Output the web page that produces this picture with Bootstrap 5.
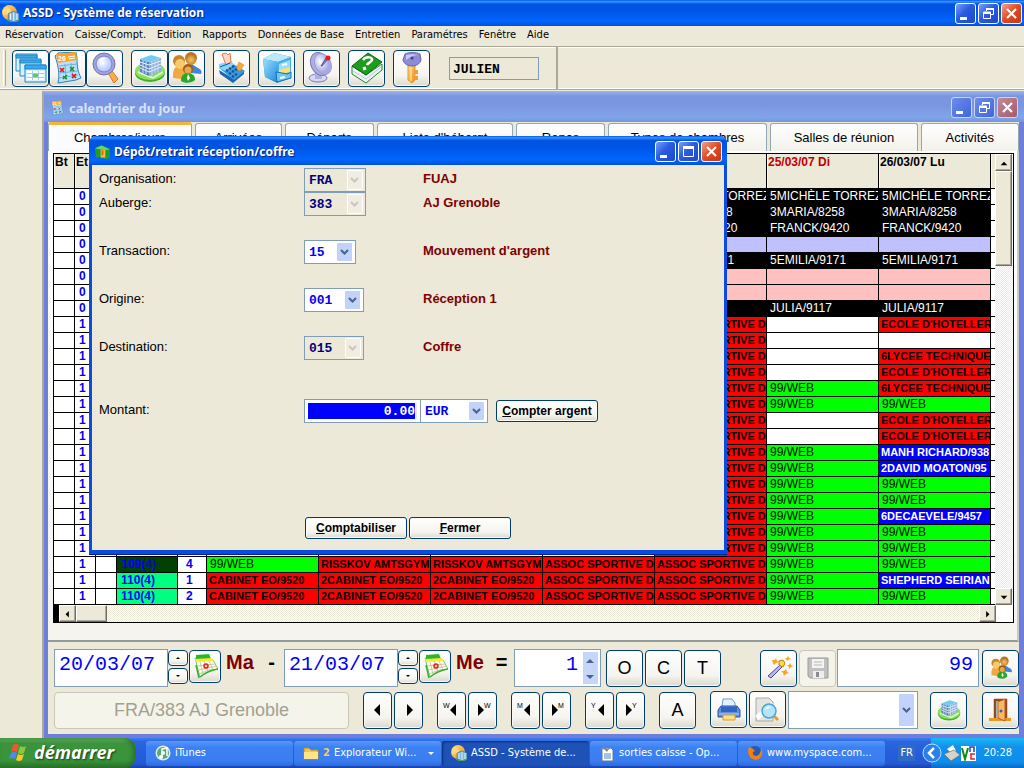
<!DOCTYPE html>
<html lang="fr">
<head>
<meta charset="utf-8">
<meta name="viewport" content="width=device-width, initial-scale=1">
<title>ASSD - Système de réservation</title>
<link rel="stylesheet" href="https://cdn.jsdelivr.net/npm/bootstrap@5.3.0/dist/css/bootstrap.min.css">
<style>
:root{--face:#ece9d8;--ui:"DejaVu Sans Condensed","DejaVu Sans",sans-serif;--sans:"Liberation Sans",Arial,sans-serif;--mono:"Liberation Mono","Courier New",monospace}
body{background:var(--face);font:13px/16px var(--sans);color:#000}
button,input,select{font-family:inherit;border-radius:0;margin:0}
/* Title bars */
.xp-title{background:linear-gradient(#0058ee 0,#3593ff 6%,#0053e1 16%,#0055e5 40%,#0066ff 82%,#0052d6 100%);color:#fff;font:bold 12px/16px "Noto Sans","Open Sans",sans-serif;text-shadow:1px 1px 1px #0a1f7a}
.app-title{height:26px;padding:0 2px}
.wgroup{gap:2px}
.wbtn{width:21px;height:21px;border:1px solid #fff;border-radius:3px;padding:0;background:linear-gradient(135deg,#7a9ef5,#2a5be0 45%,#1d48cd);display:block}
.wbtn svg,.act svg{display:block;margin:auto}
.wclose{background:linear-gradient(135deg,#f0a08a,#e04a22 50%,#c03a14)}
.child-title{background:linear-gradient(#9db4f0 0,#7b96e0 16%,#7b96e0 45%,#80a5ea 85%,#7795de 100%);color:#d8e2f8;text-shadow:none;height:31px;padding:2px 2px 0 6px;font-size:13px}
.child-title .wbtn{border-color:#c9d5f5;background:linear-gradient(135deg,#6d8cec,#3f66da)}
.child-title .wclose{background:linear-gradient(135deg,#c08a9a,#a45a6a)}
/* Menu and toolbar */
.menu{height:20px;font:11px/18px var(--ui);padding-left:5px;gap:11px}
.menu a{color:#000;text-decoration:none}
.tools{height:44px;border-top:1px solid #aca899;border-bottom:1px solid #aca899;box-shadow:inset 0 1px #fff,inset 0 -1px #fff}
.toolset{border-right:2px solid #aca899;width:558px;padding-left:3px;gap:8px}
.grip{width:3px;height:36px;border-right:1px solid #aca899;border-left:1px solid #fff;margin-right:-2px}
.act{border:1px solid #003c74;border-radius:4px;padding:0;background:linear-gradient(#fff,#f5f4ef 70%,#dcd8ca);width:37px;height:37px;font:18px/20px var(--sans);color:#000;box-shadow:inset 0 0 0 1px #faf9f6;flex:none}
.act svg{width:32px;height:32px}
.user-box{width:90px;height:23px;border:1px solid #7f9db9;background:var(--face);font:bold 13px/18px var(--mono);padding:2px 3px 0;margin-left:11px}
/* Child window */
.child{margin:1px 0 0 44px;border:solid #6f7edb;border-width:0 5px 4px 4px;background:var(--face);box-shadow:-2px 0 #aca899}
.child>.xp-title{margin:0 -5px 0 -4px}
.tabs{height:29px;gap:3px;align-items:flex-end}
.tab{height:28px;border:1px solid #91a7b4;border-bottom:0;border-radius:3px 3px 0 0;background:linear-gradient(#fff,#f2f1ea);font:13px/16px var(--sans);padding:0;text-align:center;overflow:hidden;white-space:nowrap}
.tab.on{height:29px;border-top:3px solid #f9b233;background:#fcfcfe}
.sheet{background:linear-gradient(#fff,#f4f3ee);border-bottom:2px solid #919b9c;border-right:2px solid #c8ccc8;padding:2px 3px 17px 5px}
.plan{border:1px solid #000;background:#fff}
.plan table{table-layout:fixed;width:100%;border-collapse:separate;border-spacing:0;font:12px/15px var(--sans)}
.plan td,.plan th{border:solid #000;border-width:0 1px 1px 0;padding:0 0 0 3px;height:16px;overflow:hidden;white-space:nowrap}
.plan th{height:35px;background:var(--face);vertical-align:top;padding:1px 0 0 1px;box-shadow:inset 1px 0 #f8f7f0}
.plan tr>:last-child{border-right:0}
.plan .num{color:#00f;font-weight:bold;padding-left:4px}
.plan .big{font-size:11px;font-weight:bold;padding-left:2px}
.s-k{background:#000;color:#fff}.s-l{background:#c0c0ff}.s-p{background:#ffc0c0}.s-w{background:#fff}
.s-r{background:#f00}.s-g{background:#0f0}.s-b{background:#00f;color:#fff}
.s-d{background:#004000}.s-t{background:#00ff80}
.track{background:repeating-conic-gradient(#fff 0 25%,#ece9d8 0 50%) 0 0/2px 2px}
.vbar{width:18px;flex:none}
.sb{width:17px;height:17px;border:1px solid;border-color:#fff #716f64 #716f64 #fff;background:var(--face);padding:0;box-shadow:inset -1px -1px #aca899;font-size:0;flex:none}
.vthumb{height:95px}.hthumb{width:31px}
.hbar{height:17px;border-left:5px solid #000}
.corner{width:17px;background:#fff}
/* Booking controls */
.ctl{padding:7px 0 5px 6px}
.ctl1{height:38px}.ctl2{height:38px;margin-top:4px}
.box{border:1px solid #7f9db9;background:#fff;color:#00f;font:20px/24px var(--mono);height:38px;min-width:0}
.day{width:114px;padding:0 4px 8px}
.spins{gap:2px;height:35px;margin-top:-2px;margin-right:1px}
.spin{width:20px;height:16px}
.spin svg{width:6px;height:4px}
.cal{width:32px;height:33px;margin:-4px 5px 0 0}.cal svg{width:26px;height:26px}
.wd{color:#800000;font:bold 20px/24px var(--sans);width:33px;margin-top:-12px}
.eq{font:bold 20px/24px var(--sans);width:25px;text-align:center;margin-top:-12px}
.nights{width:87px;position:relative}
.nights input{width:100%;text-align:right;padding:0 22px 8px 4px}
.nights span{position:absolute;right:3px;top:3px;width:15px;height:32px;background:#c6d6fb}
.trio{gap:2px;margin-left:5px}
.count{width:142px;text-align:right;padding:0 5px 8px;margin:0 3px 0 1px}
.act.off{border-color:#c9c7ba;background:#f5f4ea;color:#a1a192;box-shadow:none}
.nav-b{width:29px}.nav-b svg{width:27px;height:27px}
.step,.outs{gap:2px}
.arrows{gap:14px;margin:0 14px}
.outs{margin:0 12px 0 14px}
.hot{margin-right:15px}
.pick{appearance:none;border:1px solid #7f9db9;background:#fff url("data:image/svg+xml,%3Csvg xmlns='http://www.w3.org/2000/svg' width='15' height='18'%3E%3Crect width='15' height='18' rx='1' fill='%23c1d3fb'/%3E%3Cpath d='M4 7l3.500 3.500L11 7' fill='none' stroke='%234d6185' stroke-width='2'/%3E%3C/svg%3E") no-repeat right 3px center;font:bold 13px/18px var(--mono);color:#00f;height:24px;padding:2px 0 0 4px}
.pick:disabled{opacity:1;color:#000080;background-color:var(--face);background-image:url("data:image/svg+xml,%3Csvg xmlns='http://www.w3.org/2000/svg' width='16' height='20'%3E%3Crect x='.5' y='.5' width='15' height='19' rx='1' fill='%23f0eee3' stroke='%23fff'/%3E%3Cpath d='M4 8l3.500 3.500L11 8' fill='none' stroke='%23c9c7ba' stroke-width='2'/%3E%3C/svg%3E");background-position:right 2px center}
.pick-tall{height:38px;width:130px;background-image:url("data:image/svg+xml,%3Csvg xmlns='http://www.w3.org/2000/svg' width='15' height='32'%3E%3Crect width='15' height='32' rx='1' fill='%23c1d3fb'/%3E%3Cpath d='M4 14l3.500 3.500L11 14' fill='none' stroke='%234d6185' stroke-width='2'/%3E%3C/svg%3E")}
/* Cash dialog */
.dlg{position:absolute;left:89px;top:136px;width:638px;max-width:100%;border:solid #0a4be0;border-width:0 3px 4px;border-radius:7px 7px 0 0;background:var(--face);box-shadow:0 1px #001ea0}
.dlg>.xp-title{height:29px;margin:0 -3px;padding:2px 5px 0 6px;border-radius:7px 7px 0 0}
.dlg form{padding:3px 8px 11px 7px}
.frow{height:24px}
.frow>label{width:205px}
.frow>label,.said{padding-top:3px}
.slot{width:119px}
.said{font-weight:bold;color:#800000}
.amount{width:117px;height:24px;border:1px solid #7f9db9;padding:3px 5px 3px 3px;background:#00f;background-clip:content-box;color:#fff;font:bold 13px/16px var(--mono);text-align:right;box-shadow:inset 0 0 0 3px #fff}
.push{width:102px;height:22px;font:bold 12px/14px var(--sans);border-radius:3px}
.w62{width:62px}.w52{width:52px}.w60{width:60px}.w68{width:68px;margin-left:-1px}
.money{margin-top:39px}
.ends{margin:94px 0 0 206px;gap:2px}
/* Task bar */
.task{height:30px;background:linear-gradient(#3a80f0 0,#2a66de 12%,#245edc 50%,#2459d4 85%,#1941a5);font:11px/16px var(--ui);color:#fff}
.start{width:136px;border:0;border-radius:0 12px 12px 0;background:linear-gradient(#5fb35f 0,#3c933c 18%,#38943a 75%,#2a6e2a);color:#fff;font:italic bold 18px/24px "Noto Sans","Open Sans",sans-serif;text-shadow:1px 1px 2px #123c12;padding:0 0 2px 8px;box-shadow:inset -3px 0 4px #2c702c;margin-right:10px}
.tbtn{flex:0 1 147px;height:25px;border:0;border-radius:3px;background:linear-gradient(#5a98fa,#3c81f3 25%,#3a7df0 80%,#2c6adf);color:#fff;text-align:left;padding:0 6px 0 9px;white-space:nowrap;overflow:hidden;margin-right:1px}
.tbtn.on{background:#1e52b7;box-shadow:inset 1px 1px 2px #0d2e78}
.tbtn svg{flex:none}
.two{color:#ffc860}
.lang{background:#316ac5;padding:0 2px}
.tray{width:93px;background:linear-gradient(#19b9f5,#1290ea 30%,#0f8dec 80%,#0b6ac0)}
.tray svg{overflow:visible}
</style>
</head>
<body class="d-flex flex-column min-vh-100 position-relative">
<svg width="0" height="0" class="position-absolute" aria-hidden="true">
<defs>
<linearGradient id="gb" x2="1" y2="1"><stop stop-color="#9be0ff"/><stop offset="1" stop-color="#2089d8"/></linearGradient>
<linearGradient id="go" x2="1" y2="1"><stop stop-color="#ffe08a"/><stop offset="1" stop-color="#f08a10"/></linearGradient>
<radialGradient id="gp" cx=".4" cy=".35"><stop stop-color="#fff"/><stop offset="1" stop-color="#a8a8e4"/></radialGradient>
<radialGradient id="gl" cx=".4" cy=".4"><stop stop-color="#fff"/><stop offset="1" stop-color="#b4ccff"/></radialGradient>
<radialGradient id="gh"><stop offset="0" stop-color="#f2c56a"/><stop offset="1" stop-color="#c8862a"/></radialGradient>
<symbol id="i-wins" viewBox="0 0 32 32"><g fill="#d8effc" stroke="#1f86cc"><path d="M1 2h21v17H1z"/><path d="M1 3h21v3H1z" fill="#3aa8ea"/><path d="M5 7h21v17H5z"/><path d="M5 8h21v3H5z" fill="#3aa8ea"/><path d="M10 13h21v17H10z"/><path d="M10 13h21v4H10z" fill="#3aa8ea"/></g><path d="M12 19h17v9H12z" fill="#fff"/><path d="M12 21.500h17M12 25.500h17M17.500 19v9M23.500 19v9" stroke="#9ccdea"/><path d="M18 22h5v3h-5z" fill="#62c85a"/></symbol>
<symbol id="i-sheet" viewBox="0 0 32 32"><path d="M3 4L6 1l18-1 1 6c0 9 1 14 4 20l-5 2-18 3c2-9 0-18-3-27z" fill="#b8e0fa" stroke="#2c80c4"/><path d="M4 2l20-2 1 8-19 3z" fill="#ffa51c"/><text x="6" y="9" font-size="7" font-weight="bold" fill="#fff" font-family="Liberation Sans">26</text><path d="M16 5l7-1M17 7l6-1" stroke="#fff"/><path d="M7 14l18-2M8 21l18-2M7 26l19-3M13 12l1 16M19 11l2 16" stroke="#68b4e4"/><path d="M8 16l4 4m0-4l-4 4M20 22l4 4m0-4l-4 4" stroke="#e01818" stroke-width="1.700"/><path d="M18 15l4 4m0-4l-4 4M11 24l4 3m0-4l-4 4" stroke="#1b8c1b" stroke-width="1.500"/></symbol>
<symbol id="i-lens" viewBox="0 0 32 32"><path d="M19 21l4-2 6 8-4 4z" fill="#fbae4a" stroke="#d87828"/><circle cx="15" cy="12" r="11" fill="#a4a4dc" stroke="#7070b4"/><circle cx="15" cy="12" r="8" fill="url(#gl)" stroke="#8080c0"/><path d="M10 10c1-4 4-5 7-4-3 1-5 4-7 4z" fill="#fff"/></symbol>
<symbol id="i-hotel" viewBox="0 0 32 32"><ellipse cx="16" cy="21" rx="15" ry="9" fill="#3cb428"/><ellipse cx="16" cy="19" rx="15" ry="9" fill="#8ce060"/><path d="M4 20l15 6 10-6" stroke="#dff5cc" stroke-width="2" fill="none"/><path d="M6 7l9 3v14l-9-4z" fill="#5c84b8"/><path d="M15 10l12-4v13l-12 5z" fill="#8aacd8"/><path d="M6 7l11-4 10 3-12 4z" fill="#70ccf4"/><path d="M6 10l9 3 12-4M6 13l9 4 12-5M6 16l9 4 12-5" stroke="#e8f4ff" fill="none"/><path d="M9 8v13M12 9v13M18 9v14M21 8v13M24 7v13" stroke="#cfe2f6"/></symbol>
<symbol id="i-people" viewBox="0 0 32 32"><path d="M19 11l8 5c4 2 4 4 3 6l-10-1z" fill="#4684d4"/><path d="M2 23c0-7 3-9 7-9s8 3 8 9l-7 4-8-1z" fill="#f0a840"/><circle cx="20" cy="6" r="6" fill="#b87420"/><circle cx="20" cy="8" r="5" fill="url(#gh)"/><circle cx="8" cy="9" r="6" fill="#c88428"/><circle cx="9" cy="12" r="5" fill="#f8c870"/><path d="M10 29c0-6 3-8 7-8s7 2 7 7c-3 3-10 4-14 1z" fill="#28a828"/><path d="M17 22l2 4-2 3-1-3z" fill="#fff"/><circle cx="17" cy="17" r="5" fill="#a05c10"/><circle cx="17" cy="18" r="3.500" fill="#e8a850"/></symbol>
<symbol id="i-cash" viewBox="0 0 32 32"><path d="M3 18l15 9 10-9v4l-11 9-13-9z" fill="#1c68b0"/><path d="M3 16l11-6 15 9-11 9z" fill="#3898e0"/><path d="M3 12l12-3 3 4-9 6-6-3z" fill="#88d4fc"/><path d="M6 2l4-1 2 2 2-2 1 9-5 3z" fill="#ffd8c4" stroke="#e87848"/><path d="M23 10l5 3-4 6-4-2z" fill="#f8a838" stroke="#d88010" stroke-width=".5"/><path d="M10 18l2 1m1-3l2 1m1-3l2 1M13 21l2 1m1-3l2 1m1-3l2 1M16 24l2 1m1-3l2 1" stroke="#16508c" stroke-width="2"/><path d="M4 15l10-4" stroke="#1858a0"/></symbol>
<symbol id="i-cab" viewBox="0 0 32 32"><path d="M2 7L13 1l17 4v21l-14 5L4 25z" fill="#2b8fd2"/><path d="M2 7L13 1l17 4-13 5z" fill="#bce8fc"/><path d="M2 7l15 3v20L4 25z" fill="url(#gb)"/><path d="M17 10l13-5v21l-13 4z" fill="#4ab0e8"/><path d="M18 12l11-4v7l-11 4z" fill="#9cdcfa"/><path d="M21 13l5-1" stroke="#fff" stroke-width="2"/><path d="M18 18l11-3v5l-11 3z" fill="#ffe070"/><path d="M15 20l12 2 3-2v6l-14 4z" fill="#6ac8f8" stroke="#1a70b0"/><path d="M19 26l5-1" stroke="#fff" stroke-width="2"/></symbol>
<symbol id="i-dish" viewBox="0 0 32 32"><ellipse cx="12" cy="26" rx="9" ry="4" fill="#d8d8f4" stroke="#7878b8"/><path d="M9 20h7v7H9z" fill="#b0b0dc"/><ellipse cx="14" cy="12" rx="9" ry="12" transform="rotate(-25 14 12)" fill="#b0b0de" stroke="#7878b8"/><ellipse cx="17" cy="12" rx="8" ry="11" transform="rotate(-25 17 12)" fill="url(#gp)" stroke="#9090cc" stroke-width=".6"/><path d="M15 14l5-8 1 2-5 6z" fill="#7878b4" stroke="#5c5ca0"/><circle cx="22" cy="6" r="2.500" fill="#e81818"/></symbol>
<symbol id="i-book" viewBox="0 0 32 32"><path d="M1 14v8l14 9 16-13v-6L15 23z" fill="#f0f2fa" stroke="#208a20"/><path d="M1 14L17 1l14 9-16 13z" fill="#1e9c1e" stroke="#0a6a0a"/><path d="M2 19l13 8 15-12" fill="none" stroke="#c0c8d8"/><path d="M12 8c3-4 10-3 9 0 0 2-4 2-5 5" fill="none" stroke="#fff" stroke-width="2.500"/><path d="M12 17l3-1" stroke="#fff" stroke-width="3"/></symbol>
<symbol id="i-key" viewBox="0 0 32 32"><path d="M12 12h7v16l-3 3-4-3z" fill="url(#go)" stroke="#e09838"/><path d="M19 18h3v4h-3zM19 24h3v4h-3z" fill="#f0a030"/><path d="M15 12v17" stroke="#fff0b0"/><path d="M9 2c4-2 11-2 15 0l1 6c-1 4-5 6-9 6s-8-2-9-6z" fill="#8c8cd4" stroke="#6464ac"/><path d="M10 3c4-1 9-1 13 0-5 0-9 2-13 5z" fill="#c8c8f4"/><circle cx="16" cy="6" r="1.500" fill="#404080"/></symbol>
<symbol id="i-globe" viewBox="0 0 16 16"><circle cx="7" cy="7" r="7" fill="url(#go)"/><path d="M1 5c3-4 6-3 7 0s-3 5-7 4z" fill="#ffd97a"/><path d="M6 8l5-2 5 2v6l-5 2-5-2z" fill="#7cb8e0" stroke="#3a6a9a" stroke-width=".6"/><path d="M8 8v6m3-7v8m3-7v6" stroke="#fff" stroke-width=".8"/><path d="M5 14q6 4 11 0" stroke="#54b038" fill="none"/></symbol>
<symbol id="i-safe" viewBox="0 0 16 16"><path d="M0 4l7-3 9 4v9l-4 2-5-3-6 1z" fill="#1f9c2c"/><path d="M0 4l7-3 9 4-6 1z" fill="#68d860"/><path d="M6 6l5 0v8l-5 0z" fill="#f4c030"/><path d="M7 7l2-1v5l-2 1z" fill="#e06010"/></symbol>
<symbol id="i-cal" viewBox="0 0 26 26"><path d="M3 5l18 2 5 9c-7 1-12 3-18 8z" fill="#fffdf0" stroke="#5cb848" stroke-width=".8"/><path d="M4 2l13-1 2 5L4 8z" fill="#28b828"/><path d="M3 6l17-1 2 3-18 1z" fill="#f8e840"/><path d="M5 13l18-2M6 17l19-4M7 21l13-5M8 9l3 12M12 8l4 10M17 8l4 9" stroke="#c0bc90" fill="none" stroke-width=".8"/><path d="M4 12l3 13M8 24c5-4 11-7 18-8" stroke="#30b030" fill="none" stroke-width="1.500"/><circle cx="14" cy="13" r="2" fill="none" stroke="#e02020" stroke-width="1.500"/></symbol>
<symbol id="i-wand" viewBox="0 0 32 32"><path d="M5 24l12-11 2 2L8 26z" fill="#b8b8ec" stroke="#4848a0"/><path d="M16 9l4-1 2 3-2 4-4-2z" fill="#ffd83a" stroke="#c08010"/><path d="M9 8l3 0 1-2 1 3 2 1-3 1-2 2-1-2zM18 19l3 0 2-2 1 3 2 1-3 1-2 2-1-3zM24 13l2 0 1-2 1 2 2 1-2 1-2 2 0-2zM22 6l2 0 1-2 1 2 2 1-3 1-1 1-1-2z" fill="#f4a820"/></symbol>
<symbol id="i-disk" viewBox="0 0 32 32"><path d="M6 6h20v20H8l-2-2z" fill="#c0c0c0" stroke="#9a9a9a"/><path d="M10 7h12v9H10z" fill="#f4f4f4"/><path d="M12 10h8M12 13h8" stroke="#b8b8b8"/><path d="M11 19h11v7H11z" fill="#eee"/><path d="M14 20h3v5h-3z" fill="#8c8c8c"/></symbol>
<symbol id="i-print" viewBox="0 0 32 32"><path d="M9 13l1-8h9l3 4v4z" fill="#e4f2ff" stroke="#6c9ad8"/><path d="M5 16l3-4h16l3 4v7H5z" fill="#6490e0" stroke="#2850a8"/><path d="M8 13h16v5H8z" fill="#3064c4"/><path d="M6 20h20" stroke="#b4ccf8"/><path d="M10 21h12v5H10z" fill="#ffe080" stroke="#d8a020"/></symbol>
<symbol id="i-prev" viewBox="0 0 32 32"><path d="M4 4h13l4 4v19H4z" fill="#e4e4e0" stroke="#a8a8a4"/><path d="M5 24L21 10" stroke="#fff" stroke-width="5"/><path d="M22 22l4 4" stroke="#e0a030" stroke-width="3"/><circle cx="17" cy="17" r="7" fill="#b4e4fa" stroke="#48a4d8" stroke-width="1.500"/><path d="M13 16c1-4 4-4 6-3z" fill="#fff"/></symbol>
<symbol id="i-door" viewBox="0 0 32 32"><path d="M4 24h22v3H4z" fill="#f0961c"/><path d="M10 24V6h11v18" fill="#a8dcf8" stroke="#984818" stroke-width="2.500"/><path d="M13 8l7-3v22l-7-3z" fill="#f8b868" stroke="#b86018"/><circle cx="16" cy="17" r="1.500" fill="#3060c0"/></symbol>
<symbol id="w-min" viewBox="0 0 19 19"><path d="M4 13h7v3H4z" fill="#fff"/></symbol>
<symbol id="w-max" viewBox="0 0 19 19"><path d="M4.500 5v9.500h10V5z" fill="none" stroke="#fff"/><path d="M4 4h11v3H4z" fill="#fff"/></symbol>
<symbol id="w-res" viewBox="0 0 19 19"><path d="M7.500 7V4.500h7v6H12M4.500 8h7v6.500h-7z" fill="none" stroke="#fff"/><path d="M7 4h8v2H7zM4 8h8v2H4z" fill="#fff"/></symbol>
<symbol id="w-x" viewBox="0 0 19 19"><path d="M5 5l9 9m0-9l-9 9" stroke="#fff" stroke-width="2.200"/></symbol>
<symbol id="a-up" viewBox="0 0 6 4"><path d="M1 3l2-2 2 2z"/></symbol>
<symbol id="a-dn" viewBox="0 0 6 4"><path d="M1 1h4L3 3z"/></symbol>
<symbol id="a-l" viewBox="0 0 27 27"><path d="M16 7v12l-6-6z"/></symbol>
<symbol id="a-r" viewBox="0 0 27 27"><path d="M11 7v12l6-6z"/></symbol>
</defs>
</svg>

<header>
  <div class="xp-title app-title d-flex align-items-center">
    <svg width="17" height="17" class="me-1"><use href="#i-globe"/></svg><span class="me-auto">ASSD - Système de réservation</span>
    <div class="d-flex wgroup">
      <button class="wbtn" aria-label="Réduire"><svg width="19" height="19"><use href="#w-min"/></svg></button>
      <button class="wbtn" aria-label="Restaurer"><svg width="19" height="19"><use href="#w-res"/></svg></button>
      <button class="wbtn wclose" aria-label="Fermer"><svg width="19" height="19"><use href="#w-x"/></svg></button>
    </div>
  </div>
  <nav class="menu d-flex">
    <a href="#">Réservation</a><a href="#">Caisse/Compt.</a><a href="#">Edition</a><a href="#">Rapports</a><a href="#">Données de Base</a><a href="#">Entretien</a><a href="#">Paramétres</a><a href="#">Fenêtre</a><a href="#">Aide</a>
  </nav>
  <div class="tools d-flex">
    <div class="toolset d-flex align-items-center">
      <div class="grip"></div>
      <div class="d-flex">
        <button class="act" aria-label="Fenêtres"><svg><use href="#i-wins"/></svg></button>
        <button class="act" aria-label="Calendrier"><svg><use href="#i-sheet"/></svg></button>
        <button class="act" aria-label="Recherche"><svg><use href="#i-lens"/></svg></button>
      </div>
      <div class="d-flex">
        <button class="act" aria-label="Auberge"><svg><use href="#i-hotel"/></svg></button>
        <button class="act" aria-label="Clients"><svg><use href="#i-people"/></svg></button>
      </div>
      <button class="act" aria-label="Caisse"><svg><use href="#i-cash"/></svg></button>
      <button class="act" aria-label="Archives"><svg><use href="#i-cab"/></svg></button>
      <button class="act" aria-label="Transmission"><svg><use href="#i-dish"/></svg></button>
      <button class="act" aria-label="Guide"><svg><use href="#i-book"/></svg></button>
      <button class="act" aria-label="Mot de passe"><svg><use href="#i-key"/></svg></button>
      <input class="user-box" value="JULIEN" readonly aria-label="Utilisateur">
    </div>
  </div>
</header>

<main class="child flex-grow-1 d-flex flex-column">
  <div class="xp-title child-title d-flex align-items-center">
    <svg width="15" height="16" class="me-1"><use href="#i-sheet"/></svg><span class="me-auto">calendrier du jour</span>
    <div class="d-flex wgroup me-1">
      <button class="wbtn" aria-label="Réduire"><svg width="19" height="19"><use href="#w-min"/></svg></button>
      <button class="wbtn" aria-label="Restaurer"><svg width="19" height="19"><use href="#w-res"/></svg></button>
      <button class="wbtn wclose" aria-label="Fermer"><svg width="19" height="19"><use href="#w-x"/></svg></button>
    </div>
  </div>
  <div class="tabs d-flex" id="tabs"></div>
  <section class="sheet flex-grow-1">
    <div class="plan">
      <div class="d-flex">
        <div class="flex-grow-1 overflow-hidden">
          <table>
            <colgroup id="cols"></colgroup>
            <thead><tr id="heads"></tr></thead>
            <tbody id="rows"></tbody>
          </table>
        </div>
        <div class="vbar track d-flex flex-column">
          <button class="sb" aria-label="Haut"><svg width="10" height="7" viewBox="0 0 6 4"><use href="#a-up"/></svg></button>
          <div class="sb vthumb"></div>
          <button class="sb mt-auto" aria-label="Bas"><svg width="10" height="7" viewBox="0 0 6 4"><use href="#a-dn"/></svg></button>
        </div>
      </div>
      <div class="hbar track d-flex">
        <button class="sb" aria-label="Gauche"><svg width="15" height="15"><use href="#a-l"/></svg></button>
        <div class="sb hthumb"></div>
        <button class="sb ms-auto" aria-label="Droite"><svg width="15" height="15"><use href="#a-r"/></svg></button>
        <div class="corner"></div>
      </div>
    </div>
  </section>
  <section class="ctl">
    <div class="ctl1 d-flex align-items-center">
      <input class="box day" value="20/03/07" aria-label="Arrivée">
      <div class="spins d-flex flex-column"><button class="act spin" aria-label="Plus"><svg><use href="#a-up"/></svg></button><button class="act spin" aria-label="Moins"><svg><use href="#a-dn"/></svg></button></div>
      <button class="act cal" aria-label="Choisir la date"><svg><use href="#i-cal"/></svg></button>
      <span class="wd">Ma</span><span class="eq">-</span>
      <input class="box day" value="21/03/07" aria-label="Départ">
      <div class="spins d-flex flex-column"><button class="act spin" aria-label="Plus"><svg><use href="#a-up"/></svg></button><button class="act spin" aria-label="Moins"><svg><use href="#a-dn"/></svg></button></div>
      <button class="act cal" aria-label="Choisir la date"><svg><use href="#i-cal"/></svg></button>
      <span class="wd">Me</span><span class="eq">=</span>
      <div class="nights"><input class="box" value="1" aria-label="Nuits"><span><svg width="15" height="32" fill="#4d6185" class="d-block"><path d="M3 11l4-4 4 4zM3 23l4 4 4-4z"/></svg></span></div>
      <div class="d-flex trio"><button class="act">O</button><button class="act">C</button><button class="act">T</button></div>
      <div class="d-flex ms-auto step"><button class="act" aria-label="Assistant"><svg><use href="#i-wand"/></svg></button><button class="act off" disabled aria-label="Enregistrer"><svg><use href="#i-disk"/></svg></button></div>
      <input class="box count" value="99" aria-label="Places">
      <button class="act" aria-label="Clients"><svg><use href="#i-people" x="5" y="4" width="23" height="24"/></svg></button>
    </div>
    <div class="ctl2 d-flex align-items-center">
      <button class="act off flex-fill" disabled>FRA/383 AJ Grenoble</button>
      <div class="d-flex arrows" id="arrows"></div>
      <button class="act">A</button>
      <div class="d-flex outs"><button class="act" aria-label="Imprimer"><svg><use href="#i-print"/></svg></button><button class="act" aria-label="Aperçu"><svg><use href="#i-prev"/></svg></button>
      <select class="pick pick-tall" aria-label="Liste"><option></option></select></div>
      <button class="act hot" aria-label="Auberge"><svg><use href="#i-hotel" x="4" y="4" width="24" height="24"/></svg></button>
      <button class="act" aria-label="Quitter"><svg><use href="#i-door"/></svg></button>
    </div>
  </section>
</main>

<div class="dlg" role="dialog" aria-label="Dépôt/retrait réception/coffre">
  <div class="xp-title d-flex align-items-center">
    <svg width="15" height="16" class="me-1"><use href="#i-safe"/></svg><span class="me-auto">Dépôt/retrait réception/coffre</span>
    <div class="d-flex wgroup">
      <button class="wbtn" aria-label="Réduire"><svg width="19" height="19"><use href="#w-min"/></svg></button>
      <button class="wbtn" aria-label="Agrandir"><svg width="19" height="19"><use href="#w-max"/></svg></button>
      <button class="wbtn wclose" aria-label="Fermer"><svg width="19" height="19"><use href="#w-x"/></svg></button>
    </div>
  </div>
  <form onsubmit="return false">
    <div class="frow d-flex"><label for="f1">Organisation:</label><div class="slot"><select id="f1" class="pick w62" disabled><option>FRA</option></select></div><span class="said">FUAJ</span></div>
    <div class="frow d-flex mb-4"><label for="f2">Auberge:</label><div class="slot"><select id="f2" class="pick w62" disabled><option>383</option></select></div><span class="said">AJ Grenoble</span></div>
    <div class="frow d-flex mb-4"><label for="f3">Transaction:</label><div class="slot"><select id="f3" class="pick w52"><option>15</option></select></div><span class="said">Mouvement d'argent</span></div>
    <div class="frow d-flex mb-4"><label for="f4">Origine:</label><div class="slot"><select id="f4" class="pick w60"><option>001</option></select></div><span class="said">Réception 1</span></div>
    <div class="frow d-flex"><label for="f5">Destination:</label><div class="slot"><select id="f5" class="pick w60" disabled><option>015</option></select></div><span class="said">Coffre</span></div>
    <div class="frow d-flex align-items-start money"><label for="f6">Montant:</label><input id="f6" class="amount" value="0.00"><select class="pick w68" aria-label="Devise"><option>EUR</option></select><button class="act push ms-2 my-auto"><u>C</u>ompter argent</button></div>
    <div class="d-flex ends"><button class="act push"><u>C</u>omptabiliser</button><button class="act push"><u>F</u>ermer</button></div>
  </form>
</div>

<footer class="task d-flex align-items-center">
  <button class="start d-flex align-items-center align-self-stretch"><svg width="22" height="20" viewBox="0 0 22 20" class="me-1"><path d="M5 3q3-2 6 0l-2 7q-3-2-6 0z" fill="#f0582c"/><path d="M12 4q3 2 6 0l-2 7q-3 2-6 0z" fill="#8cc83c"/><path d="M3 11q3-2 6 0l-2 6q-3-2-6 0z" fill="#4c8cf0"/><path d="M10 12q3 2 6 0l-2 6q-3 2-6 0z" fill="#f8c828"/></svg>démarrer</button>
  <button class="tbtn d-flex align-items-center"><svg width="16" height="16" class="me-1"><circle cx="8" cy="8" r="7.500" fill="#dfeee4"/><circle cx="8" cy="8" r="6" fill="#5aa878"/><circle cx="8" cy="8" r="2" fill="#fff"/><path d="M7 12V4l5-1v8" stroke="#fff" stroke-width="1.500" fill="none"/><circle cx="6" cy="12" r="2" fill="#fff"/></svg>iTunes</button>
  <button class="tbtn d-flex align-items-center"><svg width="16" height="16" class="me-1"><path d="M1 3h5l2 2h7v9H1z" fill="#f0c850" stroke="#b88818"/><path d="M1 7h14v7H1z" fill="#ffe488"/></svg><b class="two me-1">2</b>Explorateur Wi...<svg width="8" height="5" class="ms-auto"><path d="M1 1h6L4 4z" fill="#fff"/></svg></button>
  <button class="tbtn on d-flex align-items-center"><svg width="16" height="16" class="me-1"><use href="#i-globe"/></svg>ASSD - Système de...</button>
  <button class="tbtn d-flex align-items-center"><svg width="16" height="16" class="me-1"><path d="M3 3h9l2 2v11H3z" fill="#fff" stroke="#68788c"/><path d="M1 4q4-5 7 0 3-3 5-1-3 0-5 4-3-4-7-3z" fill="#788898"/><path d="M5 9h7M5 11h7M5 13h7" stroke="#4888c8"/></svg>sorties caisse - Op...</button>
  <button class="tbtn d-flex align-items-center"><svg width="16" height="16" class="me-1"><circle cx="8" cy="8" r="7" fill="#2c58b0"/><path d="M2 2q-3 8 3 12 7 3 10-4 1-4-1-7 0 6-4 8-5 0-4-4l2-1q-2-3-6-4z" fill="#f08018"/></svg>www.myspace.com...</button>
  <span class="lang ms-auto me-3">FR</span>
  <div class="tray d-flex align-items-center align-self-stretch">
    <svg width="52" height="20"><circle cx="1" cy="10" r="9" fill="#2a80e8" stroke="#b8e0ff"/><path d="M3 5l-5 5 5 5" stroke="#fff" stroke-width="2.500" fill="none"/><path d="M16 6l6-4 3 6-5 2z" fill="#fff"/><path d="M13 11l10-4 6 5-9 6z" fill="#d4d4cc" stroke="#707068" stroke-width=".7"/><path d="M30 3h15v15H30z" fill="#fff"/><path d="M31 5l3 11 3-11" stroke="#0a8a1a" stroke-width="2" fill="none"/><path d="M39 9V4h4v5" stroke="#2040d0" fill="none" stroke-width="1.500"/><path d="M44 11h-4v5h4" stroke="#e02020" fill="none" stroke-width="1.500"/></svg>
    <span class="ms-auto me-2 pe-1">20:28</span>
  </div>
</footer>

<script src="https://cdn.jsdelivr.net/npm/bootstrap@5.3.0/dist/js/bootstrap.bundle.min.js"></script>
<script>
// Tab captions with their share of the strip
const tabs = [['Chambres/jours',144],['Arrivées',87],['Départs',88],["Liste d'hébergt",137],['Repas',88],['Types de chambres',160],['Salles de réunion',148],['Activités',98]];
document.getElementById('tabs').innerHTML = tabs.map(([t,w],i)=>`<button class="tab${i?'':' on'}" style="flex:${w} 1 0">${t}</button>`).join('');

document.getElementById('cols').innerHTML = [21,21,21,61,29].map(w=>`<col style="width:${w}px">`).join('') + '<col>'.repeat(7) + '<col style="width:4px">';
document.getElementById('heads').innerHTML = ['Bt','Et','','','','','','','','','25/03/07 Di','26/03/07 Lu',''].map((t,i)=>`<th${i===10?' style="color:#c00000"':''}>${t}</th>`).join('');

// Each cell is "style|text"; styles r and b are the bold group bookings
const A='r|ASSOC SPORTIVE D', E="r|ECOLE D'HOTELLER", L='r|6LYCEE TECHNIQUE', G='g|99/WEB', W='w|', M='k|5MICHÈLE TORREZ';
const last = [
 [M,M,M],['k|3MARIA/8258','k|3MARIA/8258','k|3MARIA/8258'],['k|FRANCK/9420','k|FRANCK/9420','k|FRANCK/9420'],
 ['l|','l|','l|'],['k|5EMILIA/9171','k|5EMILIA/9171','k|5EMILIA/9171'],['p|','p|','p|'],['p|','p|','p|'],['k|','k|JULIA/9117','k|JULIA/9117'],
 [A,W,E],[A,W,W],[A,W,L],[A,W,E],[A,G,L],[A,G,G],[A,W,E],[A,W,E],[A,G,'b|MANH RICHARD/938'],[A,G,'b|2DAVID MOATON/95'],
 [A,G,G],[A,G,G],[A,G,'b|6DECAEVELE/9457'],[A,G,G],[A,G,G],[A,G,G],[A,G,'b|SHEPHERD SEIRIAN'],[A,G,G]];
const C='r|2CABINET EO/9520';
const left = {
 23:['d|109(4)','4',G,'r|RISSKOV AMTSGYM','r|RISSKOV AMTSGYM',A],
 24:['t|110(4)','1','r|CABINET EO/9520',C,C,A],
 25:['t|110(4)','2','r|CABINET EO/9520',C,C,A]};
const cell = (s,x='')=>{const [k,t]=s.split('|');return `<td class="s-${k} ${'rb'.includes(k)?'big':''} ${x}">${t}</td>`};
document.getElementById('rows').innerHTML = last.map((r,i)=>{
  const l = left[i] || ['w|','','w|','w|','w|','w|'];
  return `<tr><td></td><td class="num">${i<8?0:1}</td><td></td>${cell(l[0],'num')}<td class="num ps-2">${l[1]}</td>`+l.slice(2).concat(r).map(s=>cell(s)).join('')+'<td></td></tr>';
}).join('');

// Step buttons: day, week, month, year
const txt=(k,x)=>k?`<text x="${x}" y="11" font-size="7">${k}</text>`:'';
document.getElementById('arrows').innerHTML = ['','W','M','Y'].map(k=>`<div class="d-flex step"><button class="act nav-b" aria-label="Reculer ${k}"><svg viewBox="0 0 27 27"><use href="#a-l" width="27" height="27" x="${k?2:0}"/>${txt(k,5)}</svg></button><button class="act nav-b" aria-label="Avancer ${k}"><svg viewBox="0 0 27 27"><use href="#a-r" width="27" height="27" x="${k?-2:1}"/>${txt(k,15)}</svg></button></div>`).join('');
</script>
</body>
</html>
